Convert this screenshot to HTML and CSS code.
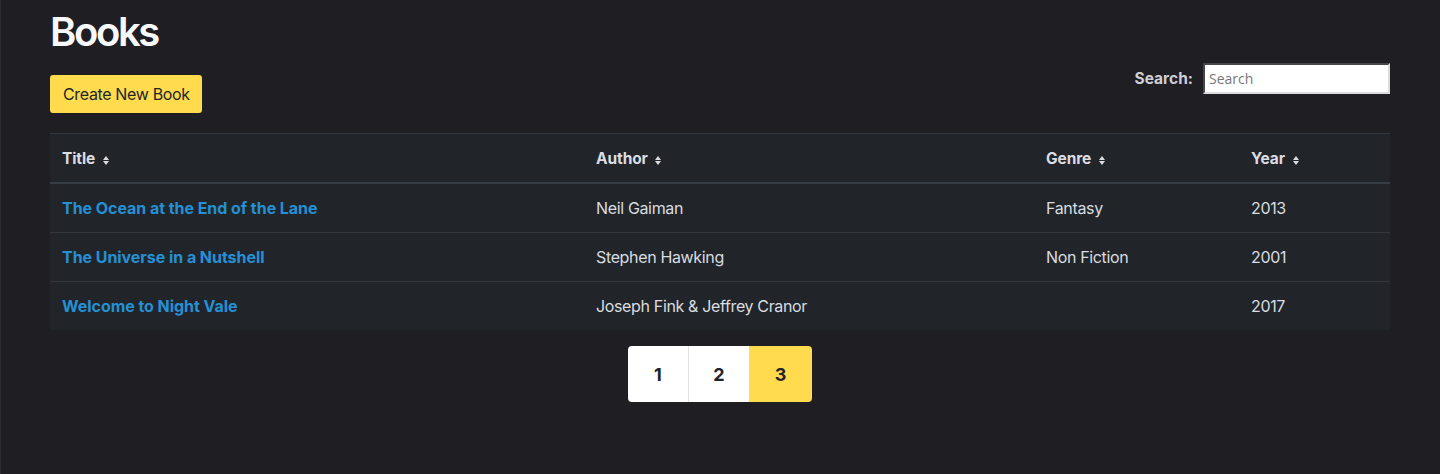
FILE: index.html
```html
<!DOCTYPE html>
<html>
<head>
<meta charset="utf-8">
<link rel="stylesheet" href="styles.css">
</head>
<body>
<div class="page">
  <h1 class="title">Books</h1>
  <div class="toolbar">
    <button class="btn-create">Create New Book</button>
    <label class="search">
      <span class="search-label">Search:</span>
      <input class="search-input" type="text" placeholder="Search">
    </label>
  </div>
  <table class="books">
    <colgroup>
      <col class="c-title"><col class="c-author"><col class="c-genre"><col class="c-year">
    </colgroup>
    <thead>
      <tr>
        <th>Title <span class="sort"></span></th>
        <th>Author <span class="sort"></span></th>
        <th>Genre <span class="sort"></span></th>
        <th>Year <span class="sort"></span></th>
      </tr>
    </thead>
    <tbody>
      <tr>
        <td><a class="book-link" href="#">The Ocean at the End of the Lane</a></td>
        <td>Neil Gaiman</td>
        <td>Fantasy</td>
        <td>2013</td>
      </tr>
      <tr>
        <td><a class="book-link" href="#">The Universe in a Nutshell</a></td>
        <td>Stephen Hawking</td>
        <td>Non Fiction</td>
        <td>2001</td>
      </tr>
      <tr>
        <td><a class="book-link" href="#">Welcome to Night Vale</a></td>
        <td>Joseph Fink &amp; Jeffrey Cranor</td>
        <td></td>
        <td>2017</td>
      </tr>
    </tbody>
  </table>
  <nav class="pager">
    <a class="page-btn" href="#">1</a>
    <a class="page-btn" href="#">2</a>
    <a class="page-btn active" href="#">3</a>
  </nav>
</div>
</body>
</html>
```
FILE: styles.css
```css
html, body {
  margin: 0;
  padding: 0;
  height: 100%;
}
body {
  background: #1f1e23;
  border-left: 1px solid #2c2c31;
  box-sizing: border-box;
  font-family: Inter, "Noto Sans", sans-serif;
  color: #dee2e6;
}
.page {
  padding: 0 50px 0 49px;
}
.title {
  margin: 0;
  padding-top: 8px;
  font-size: 40px;
  line-height: 48px;
  font-weight: 600;
  color: #f8f9fa;
  letter-spacing: -2.4px;
}
.toolbar {
  display: flex;
  justify-content: space-between;
  align-items: flex-start;
  margin-top: 7px;
}
.btn-create {
  margin-top: 12px;
  height: 38px;
  padding: 0 12px 0 13px;
  background: #ffdb4d;
  border: none;
  border-radius: 3px;
  font-family: Inter, sans-serif;
  font-size: 16px;
  letter-spacing: -0.35px;
  color: #212529;
}
.search {
  display: flex;
  align-items: center;
  gap: 10px;
}
.search-label {
  font-weight: 700;
  font-size: 15.5px;
  color: #cfcfd6;
}
.search-input {
  width: 187px;
  height: 31px;
  box-sizing: border-box;
  border: 2px inset #9a9a9a;
  border-right-color: #dcdcdc;
  border-bottom-color: #dcdcdc;
  background: #fff;
  padding: 0 4px;
  font-family: "Open Sans", sans-serif;
  font-size: 14px;
  color: #333;
}
.search-input::placeholder {
  color: #777;
}
.books {
  margin-top: 20px;
  width: 100%;
  border-collapse: collapse;
  background: #212529;
  font-size: 16px;
  letter-spacing: -0.35px;
}
.c-title { width: 534px; }
.c-author { width: 450px; }
.c-genre { width: 205px; }
.c-year { width: 151px; }
.books th {
  text-align: left;
  font-weight: 700;
  font-size: 15.5px;
  letter-spacing: -0.1px;
  color: #dcdce2;
  height: 48px;
  padding: 0 12px;
  border-top: 1px solid #32383e;
  border-bottom: 2px solid #373d44;
}
.books td {
  height: 48px;
  padding: 0 12px;
  border-top: 1px solid #32383e;
  color: #d9dce0;
}
.books tbody tr:first-child td {
  border-top: none;
  height: 48px;
}
.book-link {
  color: #2590d4;
  font-weight: 700;
  letter-spacing: -0.05px;
  text-decoration: none;
}
.sort {
  display: inline-block;
  position: relative;
  width: 7px;
  height: 9px;
  margin-left: 4px;
  vertical-align: -1px;
}
.sort::before, .sort::after {
  content: "";
  position: absolute;
  left: 0;
  border-left: 3.5px solid transparent;
  border-right: 3.5px solid transparent;
}
.sort::before {
  top: 0;
  border-bottom: 4px solid #dcdce2;
}
.sort::after {
  bottom: 0;
  border-top: 4px solid #dcdce2;
}
.pager {
  display: flex;
  justify-content: center;
  margin-top: 16px;
}
.page-btn {
  display: flex;
  align-items: center;
  justify-content: center;
  width: 60px;
  height: 56px;
  background: #fff;
  color: #212529;
  font-weight: 700;
  font-size: 18px;
  text-decoration: none;
  border-left: 1px solid #dee2e6;
}
.page-btn:first-child {
  border-left: none;
  border-radius: 4px 0 0 4px;
}
.page-btn.active {
  width: 63px;
  background: #ffdb4d;
  border-left: none;
  border-radius: 0 4px 4px 0;
}
```
